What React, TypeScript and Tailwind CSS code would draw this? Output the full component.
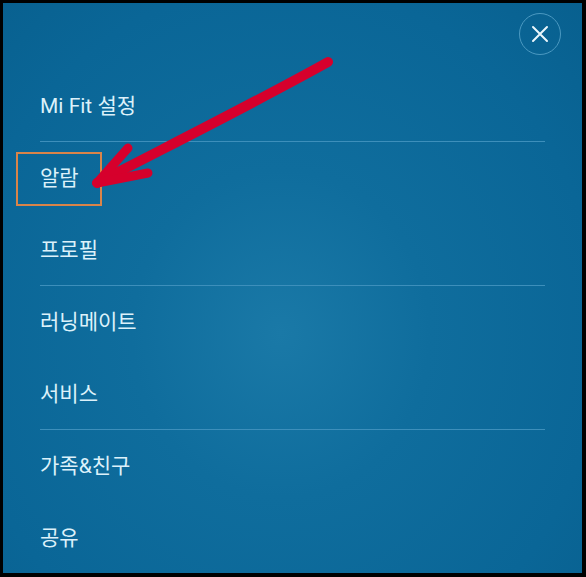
import React from "react";

const items: { label: string; divider: boolean }[] = [
  { label: "Mi Fit 설정", divider: true },
  { label: "알람", divider: false },
  { label: "프로필", divider: true },
  { label: "러닝메이트", divider: false },
  { label: "서비스", divider: true },
  { label: "가족&친구", divider: false },
  { label: "공유", divider: false },
];

export default function App() {
  return (
    <div className="w-[586px] h-[577px] bg-black pl-[3px] pt-[3px] pr-[4px] pb-[4px]">
      <div
        className="relative w-full h-full overflow-hidden bg-[radial-gradient(ellipse_at_48%_58%,#1a79a7_0%,#0f6d9d_35%,#0a6697_75%,#08608f_100%)]"
        style={{ fontFamily: "Roboto, 'Noto Sans CJK KR', sans-serif" }}
      >
        <div className="flex justify-end pt-[10px] pr-[21px]">
          <div className="w-[42px] h-[42px] rounded-full border border-[#4b99c1] flex items-center justify-center">
            <svg width="18" height="18" viewBox="0 0 18 18" fill="none">
              <path d="M2 2L16 16M16 2L2 16" stroke="#eaf6fc" strokeWidth="2" strokeLinecap="round" />
            </svg>
          </div>
        </div>
        <div className="mt-[15px] px-[37px]">
          {items.map((it) => (
            <div
              key={it.label}
              className={
                "h-[72px] flex items-center pt-[3px] text-[21px] text-[#dcf1fa] " +
                (it.divider ? "border-b border-[#3d8fbb]" : "border-b border-transparent")
              }
            >
              {it.label}
            </div>
          ))}
        </div>
        <div className="absolute left-[13px] top-[149px] w-[86px] h-[54px] border-2 border-[#d98449]" />
        <svg className="absolute left-0 top-0" width="579" height="570" viewBox="3 3 579 570">
          <path
            d="M328 62 C 260 100, 180 140, 97 183"
            stroke="#d6002c"
            strokeWidth="10"
            strokeLinecap="round"
            fill="none"
          />
          <path d="M97 183 L128 148" stroke="#d6002c" strokeWidth="9" strokeLinecap="round" fill="none" />
          <path d="M97 183 L148 173" stroke="#d6002c" strokeWidth="9" strokeLinecap="round" fill="none" />
        </svg>
      </div>
    </div>
  );
}
